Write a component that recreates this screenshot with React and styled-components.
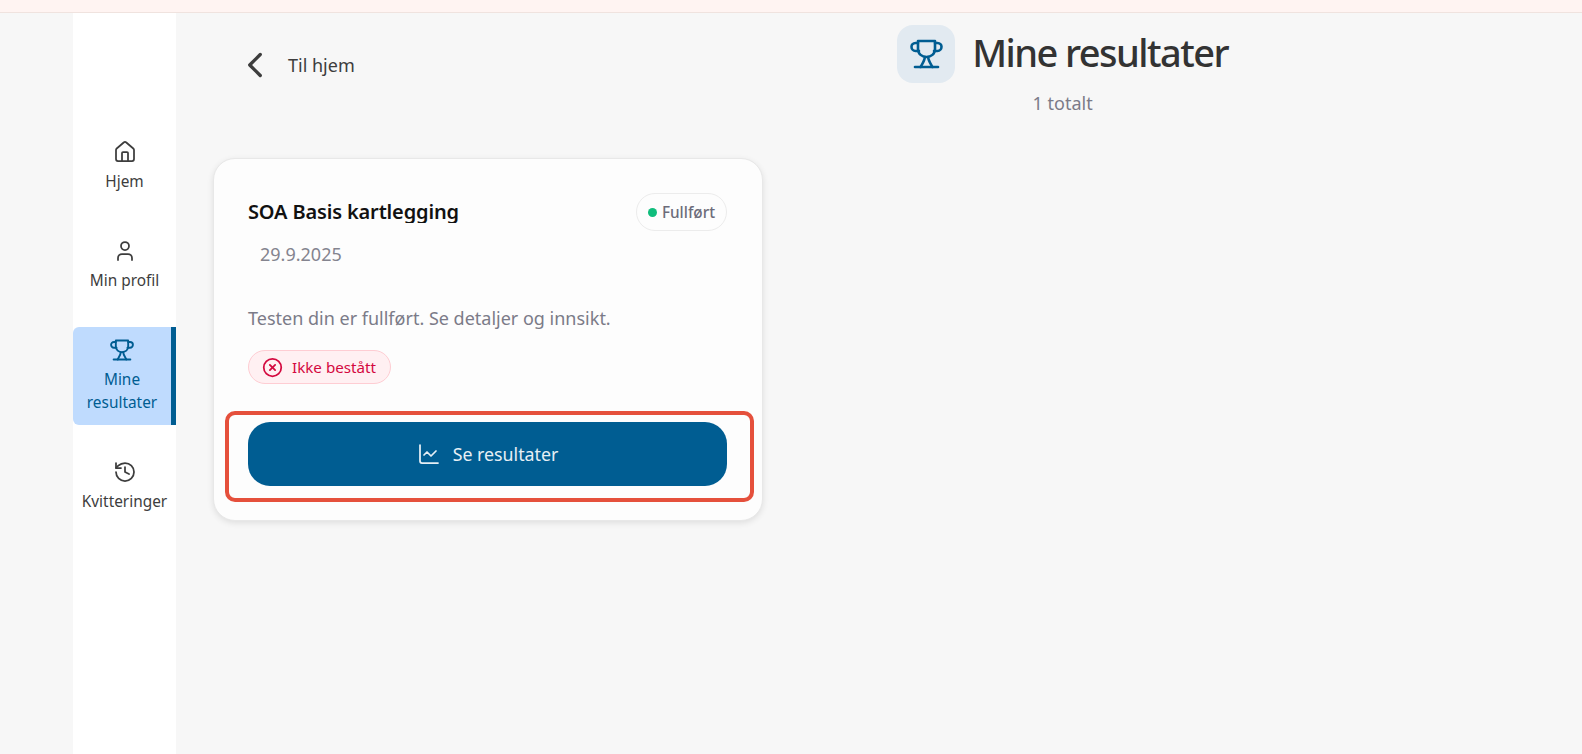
import styled, { createGlobalStyle } from 'styled-components';
import { ChevronLeft, ChartLine, CircleX, History, House, User } from 'lucide-react';

const GlobalStyle = createGlobalStyle`
  html, body {
    margin: 0;
    height: 100%;
    background: #f7f7f7;
    font-family: 'Noto Sans', sans-serif;
  }
  * { box-sizing: border-box; }
`;

const TopBanner = styled.div`
  height: 13px;
  background: #fff4f2;
  border-bottom: 1px solid #f0e3df;
`;

const Shell = styled.div`
  display: flex;
  height: 741px;
  padding-left: 73px;
  overflow: hidden;
`;

const Sidebar = styled.nav`
  width: 103px;
  flex-shrink: 0;
  background: #fff;
  display: flex;
  flex-direction: column;
  gap: 24px;
  padding-top: 116px;
`;

const NavItem = styled.a`
  display: flex;
  flex-direction: column;
  align-items: center;
  gap: 6px;
  padding: 11px 0;
  font-size: 15.4px;
  line-height: 23px;
  text-align: center;
  color: ${({ $active }) => ($active ? '#005d92' : '#3d3d3d')};
  background: ${({ $active }) => ($active ? '#bfdbfe' : 'transparent')};
  border-right: ${({ $active }) => ($active ? '5px solid #005d92' : 'none')};
  border-radius: ${({ $active }) => ($active ? '6px 0 0 6px' : '0')};
`;

const Main = styled.main`
  flex: 1;
  padding: 12px 354px 0 37px;
`;

const PageHeader = styled.header`
  display: flex;
  justify-content: space-between;
  align-items: flex-start;
  margin-bottom: 43px;
`;

const BackLink = styled.a`
  display: flex;
  align-items: center;
  gap: 12px;
  margin: 19px 0 0 21px;
  height: 42px;
  font-size: 18px;
  color: #3d3d3d;
`;

const TitleBlock = styled.div`
  display: flex;
  flex-direction: column;
  align-items: center;
`;

const TitleRow = styled.div`
  display: flex;
  align-items: center;
  gap: 17px;
`;

const TitleIcon = styled.div`
  width: 58px;
  height: 58px;
  border-radius: 16px;
  background: #e2eaf1;
  color: #005d92;
  display: flex;
  align-items: center;
  justify-content: center;
`;

const Title = styled.h1`
  margin: 0 0 4px;
  font-size: 38px;
  font-weight: 500;
  letter-spacing: -1.55px;
  line-height: 54px;
  color: #333;
`;

const Subtitle = styled.p`
  margin: 8px 0 0;
  font-size: 18px;
  line-height: 24px;
  color: #7b7b88;
`;

const Card = styled.article`
  position: relative;
  width: 550px;
  height: 363px;
  padding: 34px 35px 34px 34px;
  background: #fdfdfd;
  border: 1px solid #e8e8e8;
  border-radius: 22px;
  box-shadow: 0 2px 6px rgba(0, 0, 0, 0.1);
`;

const CardHead = styled.div`
  display: flex;
  justify-content: space-between;
  align-items: flex-start;
`;

// The descenders are cut by the fixed height, same as on the real page
const CardTitle = styled.h2`
  margin: 0;
  font-size: 20px;
  font-weight: 600;
  letter-spacing: -0.15px;
  line-height: 38px;
  height: 30px;
  overflow: hidden;
  color: #111;
`;

const StatusPill = styled.span`
  display: flex;
  align-items: center;
  gap: 5px;
  height: 38px;
  padding: 0 11px;
  font-size: 15.3px;
  font-weight: 500;
  color: #6c6c7a;
  border: 1px solid #ececec;
  border-radius: 999px;
`;

const StatusDot = styled.i`
  width: 9px;
  height: 9px;
  border-radius: 50%;
  background: #10bd7c;
`;

const CardDate = styled.p`
  margin: 11px 0 0 12px;
  font-size: 18px;
  line-height: 24px;
  color: #84848f;
`;

const CardText = styled.p`
  margin: 40px 0 0;
  font-size: 18px;
  line-height: 24px;
  color: #7b7b88;
`;

const ResultBadge = styled.span`
  display: inline-flex;
  align-items: center;
  gap: 9px;
  height: 34px;
  margin-top: 20px;
  padding: 0 14px 0 13px;
  font-size: 15.2px;
  color: #d4093f;
  background: #fff0f2;
  border: 1px solid #fecdd3;
  border-radius: 999px;
`;

const PrimaryButton = styled.button`
  display: flex;
  align-items: center;
  justify-content: center;
  gap: 12px;
  width: 479px;
  height: 64px;
  margin-top: 38px;
  font: inherit;
  font-size: 17.8px;
  color: #e6eff5;
  background: #005d92;
  border: none;
  border-radius: 22px;
`;

const Highlight = styled.div`
  position: absolute;
  left: 11px;
  top: 252px;
  width: 529px;
  height: 91px;
  border: 4px solid #e5503c;
  border-radius: 10px;
  pointer-events: none;
`;

// Hourglass-stem trophy, lucide's one has a different shape
const TrophyIcon = ({ width, height }) => (
  <svg width={width} height={height} viewBox="0 0 33 30" fill="none" stroke="currentColor" strokeWidth="2.6" strokeLinecap="round" strokeLinejoin="round">
    <path d="M8 2H25V10C25 15 21 18 16.5 18C12 18 8 15 8 10Z" />
    <path d="M8 4H5.5C3 4 1.5 5.8 1.5 7.8C1.5 10 3.2 12 5.5 12H9" />
    <path d="M25 4H27.5C30 4 31.5 5.8 31.5 7.8C31.5 10 29.8 12 27.5 12H24" />
    <path d="M14.8 18C14.8 21.5 12.5 24.5 10.5 28" />
    <path d="M18.2 18C18.2 21.5 20.5 24.5 22.5 28" />
    <path d="M5 28H28" />
  </svg>
);

const NavIcon = ({ Icon }) => (Icon ? <Icon size={24} strokeWidth={1.75} /> : <TrophyIcon width={24} height={24} />);

const navItems = [
  { label: 'Hjem', Icon: House },
  { label: 'Min profil', Icon: User },
  { label: 'Mine resultater', active: true },
  { label: 'Kvitteringer', Icon: History },
];

export default function App() {
  return (
    <>
      <GlobalStyle />
      <TopBanner />
      <Shell>
        <Sidebar>
          {navItems.map(({ label, Icon, active }) => (
            <NavItem key={label} $active={active}>
              <NavIcon Icon={Icon} />
              <span>{label}</span>
            </NavItem>
          ))}
        </Sidebar>
        <Main>
          <PageHeader>
            <BackLink>
              <ChevronLeft size={42} strokeWidth={1.9} />
              Til hjem
            </BackLink>
            <TitleBlock>
              <TitleRow>
                <TitleIcon>
                  <TrophyIcon width={33} height={30} />
                </TitleIcon>
                <Title>Mine resultater</Title>
              </TitleRow>
              <Subtitle>1 totalt</Subtitle>
            </TitleBlock>
          </PageHeader>
          <Card>
            <CardHead>
              <CardTitle>SOA Basis kartlegging</CardTitle>
              <StatusPill>
                <StatusDot />
                Fullført
              </StatusPill>
            </CardHead>
            <CardDate>29.9.2025</CardDate>
            <CardText>Testen din er fullført. Se detaljer og innsikt.</CardText>
            <ResultBadge>
              <CircleX size={21} strokeWidth={2} />
              Ikke bestått
            </ResultBadge>
            <PrimaryButton>
              <ChartLine size={24} strokeWidth={1.75} />
              Se resultater
            </PrimaryButton>
            <Highlight />
          </Card>
        </Main>
      </Shell>
    </>
  );
}
